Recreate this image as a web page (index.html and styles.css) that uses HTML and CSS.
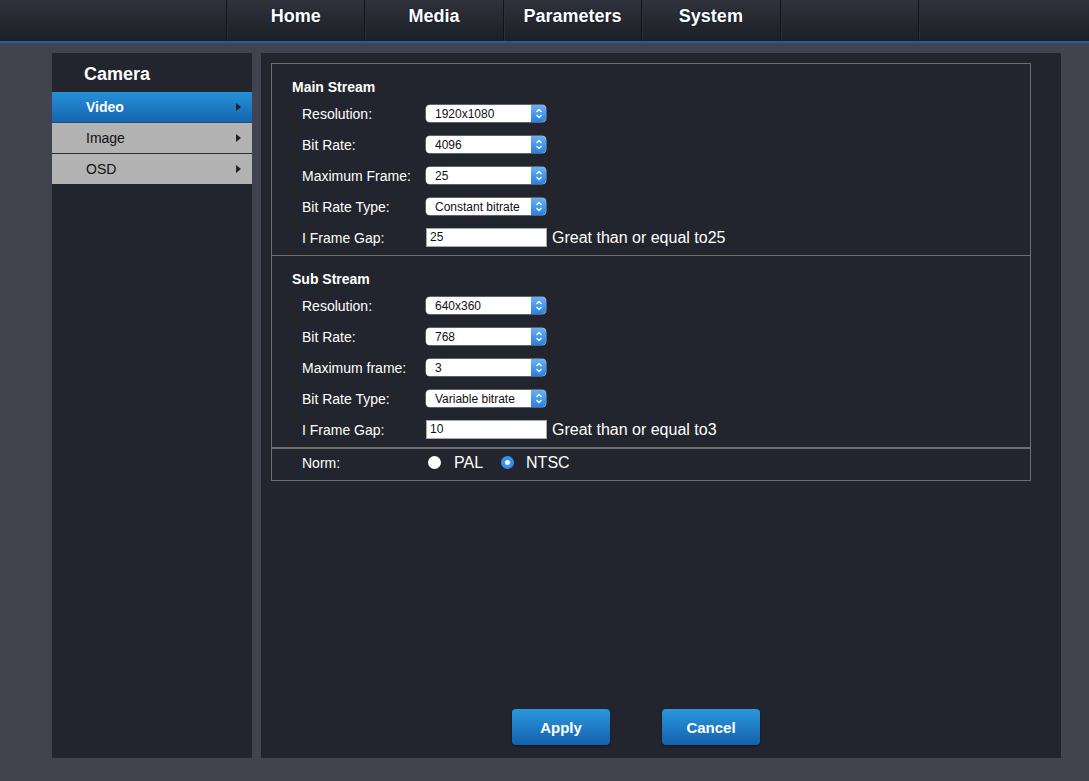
FILE: index.html
```html
<!DOCTYPE html>
<html>
<head>
<meta charset="utf-8">
<link rel="stylesheet" href="styles.css">
</head>
<body>
<header class="topbar">
  <nav class="nav">
    <div class="nav-item">Home</div>
    <div class="nav-item">Media</div>
    <div class="nav-item">Parameters</div>
    <div class="nav-item">System</div>
    <div class="nav-item"></div>
    <div class="nav-end"></div>
  </nav>
</header>
<div class="layout">
  <aside class="sidebar">
    <div class="side-title">Camera</div>
    <div class="side-item active">Video<span class="tri"></span></div>
    <div class="side-item">Image<span class="tri"></span></div>
    <div class="side-item last">OSD<span class="tri"></span></div>
  </aside>
  <main class="panel">
    <div class="box">
      <section class="section">
        <div class="sec-title">Main Stream</div>
        <div class="row"><span class="label">Resolution:</span><div class="select"><span class="sel-text">1920x1080</span><span class="sel-btn"><svg width="8" height="11" viewBox="0 0 8 11"><path d="M1.5 4 L4 1.5 L6.5 4 M1.5 7 L4 9.5 L6.5 7" fill="none" stroke="#fff" stroke-width="1.3"/></svg></span></div></div>
        <div class="row"><span class="label">Bit Rate:</span><div class="select"><span class="sel-text">4096</span><span class="sel-btn"><svg width="8" height="11" viewBox="0 0 8 11"><path d="M1.5 4 L4 1.5 L6.5 4 M1.5 7 L4 9.5 L6.5 7" fill="none" stroke="#fff" stroke-width="1.3"/></svg></span></div></div>
        <div class="row"><span class="label">Maximum Frame:</span><div class="select"><span class="sel-text">25</span><span class="sel-btn"><svg width="8" height="11" viewBox="0 0 8 11"><path d="M1.5 4 L4 1.5 L6.5 4 M1.5 7 L4 9.5 L6.5 7" fill="none" stroke="#fff" stroke-width="1.3"/></svg></span></div></div>
        <div class="row"><span class="label">Bit Rate Type:</span><div class="select"><span class="sel-text">Constant bitrate</span><span class="sel-btn"><svg width="8" height="11" viewBox="0 0 8 11"><path d="M1.5 4 L4 1.5 L6.5 4 M1.5 7 L4 9.5 L6.5 7" fill="none" stroke="#fff" stroke-width="1.3"/></svg></span></div></div>
        <div class="row"><span class="label">I Frame Gap:</span><div class="input">25</div><span class="hint">Great than or equal to25</span></div>
      </section>
      <section class="section sub">
        <div class="sec-title">Sub Stream</div>
        <div class="row"><span class="label">Resolution:</span><div class="select"><span class="sel-text">640x360</span><span class="sel-btn"><svg width="8" height="11" viewBox="0 0 8 11"><path d="M1.5 4 L4 1.5 L6.5 4 M1.5 7 L4 9.5 L6.5 7" fill="none" stroke="#fff" stroke-width="1.3"/></svg></span></div></div>
        <div class="row"><span class="label">Bit Rate:</span><div class="select"><span class="sel-text">768</span><span class="sel-btn"><svg width="8" height="11" viewBox="0 0 8 11"><path d="M1.5 4 L4 1.5 L6.5 4 M1.5 7 L4 9.5 L6.5 7" fill="none" stroke="#fff" stroke-width="1.3"/></svg></span></div></div>
        <div class="row"><span class="label">Maximum frame:</span><div class="select"><span class="sel-text">3</span><span class="sel-btn"><svg width="8" height="11" viewBox="0 0 8 11"><path d="M1.5 4 L4 1.5 L6.5 4 M1.5 7 L4 9.5 L6.5 7" fill="none" stroke="#fff" stroke-width="1.3"/></svg></span></div></div>
        <div class="row"><span class="label">Bit Rate Type:</span><div class="select"><span class="sel-text">Variable bitrate</span><span class="sel-btn"><svg width="8" height="11" viewBox="0 0 8 11"><path d="M1.5 4 L4 1.5 L6.5 4 M1.5 7 L4 9.5 L6.5 7" fill="none" stroke="#fff" stroke-width="1.3"/></svg></span></div></div>
        <div class="row"><span class="label">I Frame Gap:</span><div class="input">10</div><span class="hint">Great than or equal to3</span></div>
      </section>
      <div class="norm">
        <span class="label">Norm:</span>
        <span class="radio"></span><span class="radio-text">PAL</span>
        <span class="radio checked"></span><span class="radio-text">NTSC</span>
      </div>
    </div>
    <div class="actions">
      <div class="btn">Apply</div>
      <div class="btn">Cancel</div>
    </div>
  </main>
</div>
</body>
</html>
```
FILE: styles.css
```css
html, body {
  margin: 0;
  padding: 0;
}
body {
  background: #41444f;
  font-family: "Liberation Sans", Arial, sans-serif;
  color: #fff;
  width: 1089px;
  height: 781px;
  overflow: hidden;
}
.topbar {
  height: 41px;
  background: linear-gradient(#30333c, #1c1e25);
  border-bottom: 2px solid #1b5eaa;
}
.nav {
  display: flex;
  height: 41px;
  padding-left: 226px;
}
.nav-item {
  width: 137.4px;
  flex: none;
  border-left: 1px solid #121317;
  box-shadow: inset 1px 0 0 #2d3038;
  font-weight: bold;
  font-size: 18px;
  line-height: 32px;
  text-align: center;
  color: #fff;
  text-shadow: 0 0 2px #10233d, 0 0 1px #000;
}
.nav-end {
  border-left: 1px solid #121317;
  box-shadow: inset 1px 0 0 #2d3038;
  width: 2px;
}
.layout {
  display: flex;
  gap: 9px;
  padding: 10px 0 0 52px;
}
.sidebar {
  width: 200px;
  height: 705px;
  background: #22252d;
}
.side-title {
  height: 39px;
  padding-left: 32px;
  font-size: 18px;
  font-weight: bold;
  line-height: 42px;
  box-sizing: border-box;
}
.side-item {
  position: relative;
  height: 30px;
  line-height: 30px;
  padding-left: 34px;
  font-size: 14px;
  color: #111;
  background: #b3b3b3;
  border-bottom: 1px solid #2e2f33;
}
.side-item.active {
  background: linear-gradient(#2491d9, #1664b0);
  border-bottom: 1px solid #1a4c80;
  color: #fff;
  font-weight: bold;
}
.side-item.last {
  border-bottom: none;
}
.tri {
  position: absolute;
  right: 11px;
  top: 11px;
  width: 0;
  height: 0;
  border-top: 4px solid transparent;
  border-bottom: 4px solid transparent;
  border-left: 5px solid #222;
}
.panel {
  width: 800px;
  height: 705px;
  background: #22252d;
  padding: 10px 0 0 10px;
  box-sizing: border-box;
  display: flex;
  flex-direction: column;
}
.box {
  width: 760px;
  border: 1px solid #6e6e6e;
  box-sizing: border-box;
}
.section {
  padding: 13px 0 2px 20px;
}
.section.sub {
  border-top: 1px solid #6e6e6e;
}
.sec-title {
  height: 21px;
  line-height: 20px;
  font-size: 14px;
  font-weight: bold;
}
.row {
  display: flex;
  align-items: center;
  height: 31px;
  padding-left: 10px;
}
.label {
  width: 124px;
  font-size: 14px;
  flex: none;
}
.select {
  width: 120px;
  height: 17px;
  background: #fff;
  border-radius: 4px;
  display: flex;
  align-items: center;
  justify-content: space-between;
  overflow: hidden;
  box-shadow: 0 0 0 0.5px #9aa0a8;
}
.sel-text {
  color: #111;
  font-size: 12px;
  padding-left: 9px;
}
.sel-btn {
  width: 15px;
  height: 17px;
  background: linear-gradient(#69b1f7, #2a80e4);
  display: flex;
  align-items: center;
  justify-content: center;
}
.input {
  width: 121px;
  height: 19px;
  box-sizing: border-box;
  background: #fff;
  border: 1px solid #a9a9a9;
  color: #111;
  font-size: 12px;
  line-height: 17px;
  padding-left: 3px;
}
.hint {
  font-size: 16px;
  margin-left: 5px;
}
.norm {
  display: flex;
  align-items: center;
  height: 27px;
  padding: 0 0 4px 30px;
  border-top: 2px solid #6e6e6e;
}
.radio {
  width: 13px;
  height: 13px;
  border-radius: 50%;
  background: #fff;
  margin-left: 2px;
  box-sizing: border-box;
  flex: none;
}
.radio.checked {
  border: 4.5px solid #3a8ff0;
  background: #fff;
  margin-left: 18px;
}
.radio-text {
  font-size: 16px;
  margin-left: 13px;
}
.radio.checked + .radio-text {
  margin-left: 12px;
}
.actions {
  margin-top: auto;
  display: flex;
  gap: 52px;
  padding: 0 0 13px 241px;
}
.btn {
  width: 98px;
  height: 36px;
  box-sizing: border-box;
  border-radius: 4px;
  background: linear-gradient(#2a97dc, #1462ae);
  box-shadow: 0 1px 2px rgba(0,0,0,.5);
  font-weight: bold;
  font-size: 15px;
  line-height: 38px;
  text-align: center;
  color: #fff;
}
```
